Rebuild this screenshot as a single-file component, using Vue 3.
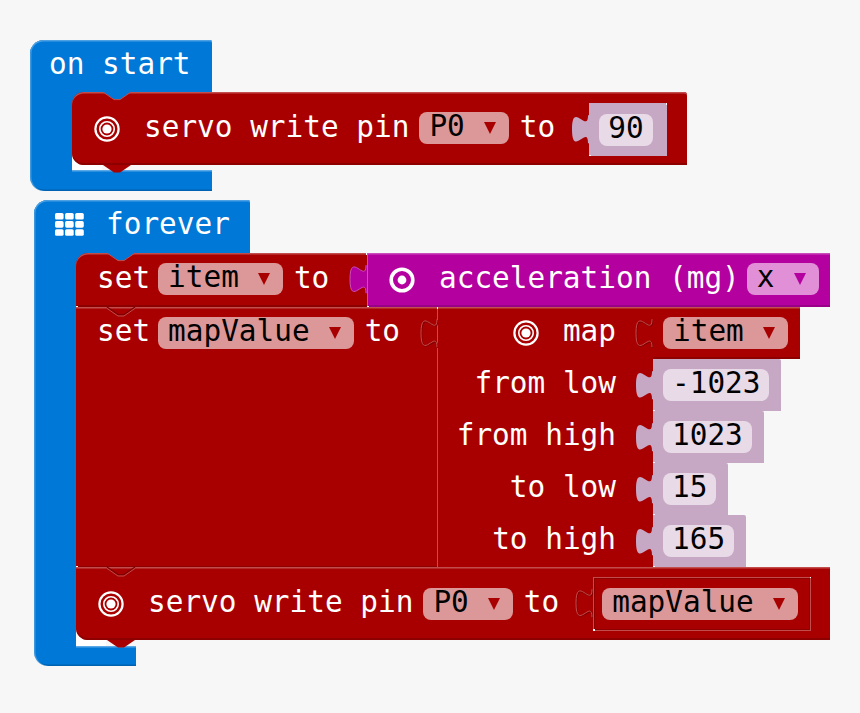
<template>
  <div class="page">
    <svg class="defs" aria-hidden="true">
      <defs>
        <path id="tab-shape" d="M17 .2H16c0 19-16-15-16 14s16-5 16 14h1z" />
        <path id="tab-edge" d="M16 .2c0 19-16-15-16 14s16-5 16 14" />
        <path id="notch-shape" d="M0 0l11 7.6h6L28 0z" />
        <path id="notch-edge" d="M0 0l11 7.6h6L28 0" />
        <g id="rings">
          <circle cx="14" cy="14" r="11.6" fill="none" stroke="#fff" stroke-width="2.2" />
          <circle cx="14" cy="14" r="7.2" fill="none" stroke="#fff" stroke-width="1.6" />
          <circle cx="14" cy="14" r="4.6" fill="#fff" />
        </g>
      </defs>
    </svg>

    <!-- on start -->
    <section class="hat">
      <header class="hat-head head-start">on start</header>
      <div class="hat-body">
        <div class="arm"></div>
        <div class="stack">
          <div class="block red servo servo-start first last">
            <svg class="notch notch-blue" viewBox="0 0 28 10"><use href="#notch-shape" /><use class="edge" href="#notch-edge" /></svg>
            <svg class="icon" viewBox="0 0 28 28"><use href="#rings" /></svg>
            <span class="label">servo write pin</span>
            <span class="pill"><span>P0</span><i class="arrow"></i></span>
            <span class="label to">to</span>
            <svg class="tab tab-lilac" viewBox="0 0 17 29"><use href="#tab-shape" /></svg>
            <span class="shadow shadow-90 dot-tr dot-bl"><span class="num">90</span></span>
            <svg class="bump" viewBox="0 0 28 10"><use href="#notch-shape" /></svg>
          </div>
          <div class="gap"></div>
        </div>
      </div>
      <footer class="hat-foot foot-start"></footer>
    </section>

    <!-- forever -->
    <section class="hat hat-forever">
      <header class="hat-head head-forever">
        <svg class="grid-icon" viewBox="0 0 29 23">
          <rect v-for="c in gridCells" :key="c.key" :x="c.x" :y="c.y" width="8.6" height="6.6" rx="1.6" fill="#fff" />
        </svg>
        forever
      </header>
      <div class="hat-body">
        <div class="arm"></div>
        <div class="stack">
          <div class="row row-first">
            <div class="block red set first dot-tr dot-bl">
              <svg class="notch notch-blue" viewBox="0 0 28 10"><use href="#notch-shape" /><use class="edge" href="#notch-edge" /></svg>
              <span class="label">set</span>
              <span class="pill item"><span>item</span><i class="arrow"></i></span>
              <span class="label to">to</span>
              <svg class="tab tab-purple" viewBox="0 0 17 29"><use href="#tab-shape" /><use class="edge" href="#tab-edge" /></svg>
            </div>
            <div class="block purple dot-bl">
              <svg class="icon" viewBox="0 0 28 28">
                <circle cx="14" cy="14" r="10.8" fill="none" stroke="#fff" stroke-width="3.6" />
                <circle cx="14" cy="14" r="4.4" fill="#fff" />
              </svg>
              <span class="label">acceleration (mg)</span>
              <span class="pill pill-purple"><span>x</span><i class="arrow"></i></span>
            </div>
          </div>

          <div class="row">
            <div class="block red set tall dot-tr dot-bl">
              <svg class="notch notch-red" viewBox="0 0 28 10"><use class="edge-dark" href="#notch-edge" /><use class="edge" href="#notch-edge" y="1.4" /></svg>
              <div class="set-line">
                <span class="label">set</span>
                <span class="pill"><span>mapValue</span><i class="arrow"></i></span>
                <span class="label to">to</span>
                <svg class="tab tab-ghost" viewBox="0 0 17 29"><use class="edge-dark" href="#tab-edge" x=".7" y=".7" /><use class="edge" href="#tab-edge" /></svg>
              </div>
            </div>
            <div class="map">
              <div v-for="(r, i) in mapRows" :key="r.label" class="map-row">
                <div class="block red map-label" :class="{ 'map-top': i === 0 }">
                  <svg v-if="i === 0" class="icon icon-map" viewBox="0 0 28 28"><use href="#rings" /></svg>
                  <span class="label">{{ r.label }}</span>
                  <svg v-if="i === 0" class="tab tab-ghost" viewBox="0 0 17 29"><use class="edge-dark" href="#tab-edge" x=".7" y=".7" /><use class="edge" href="#tab-edge" /></svg>
                  <svg v-else class="tab tab-lilac" viewBox="0 0 17 29"><use href="#tab-shape" /></svg>
                </div>
                <div v-if="i === 0" class="block red map-item">
                  <span class="pill item"><span>item</span><i class="arrow"></i></span>
                </div>
                <div v-else class="shadow map-value dot-bl"><span class="num">{{ r.value }}</span></div>
              </div>
            </div>
          </div>

          <div class="block red servo wide last">
            <svg class="notch notch-red" viewBox="0 0 28 10"><use class="edge-dark" href="#notch-edge" /><use class="edge" href="#notch-edge" y="1.4" /></svg>
            <svg class="icon" viewBox="0 0 28 28"><use href="#rings" /></svg>
            <span class="label">servo write pin</span>
            <span class="pill"><span>P0</span><i class="arrow"></i></span>
            <span class="label to">to</span>
            <svg class="tab tab-ghost" viewBox="0 0 17 29"><use class="edge-dark" href="#tab-edge" x=".7" y=".7" /><use class="edge" href="#tab-edge" /></svg>
            <span class="var-box dot-tr dot-bl"><span class="pill"><span>mapValue</span><i class="arrow"></i></span></span>
            <svg class="bump" viewBox="0 0 28 10"><use href="#notch-shape" /></svg>
          </div>
          <div class="gap"></div>
        </div>
      </div>
      <footer class="hat-foot foot-forever"></footer>
    </section>
  </div>
</template>

<script setup>
// the 3x3 "forever" glyph
const gridCells = []
for (let r = 0; r < 3; r++) {
  for (let c = 0; c < 3; c++) {
    gridCells.push({ key: r + '-' + c, x: c * 10.1, y: r * 8.1 })
  }
}

const mapRows = [
  { label: 'map' },
  { label: 'from low', value: '-1023' },
  { label: 'from high', value: '1023' },
  { label: 'to low', value: '15' },
  { label: 'to high', value: '165' },
]
</script>

<style>
html,
body {
  margin: 0;
  background: #f7f7f7;
}
</style>

<style scoped>
.page {
  box-sizing: border-box;
  width: 860px;
  height: 713px;
  overflow: hidden;
  padding: 40px 0 0 30px;
  font-family: "DejaVu Sans Mono", "Liberation Mono", monospace;
  font-size: 29.4px;
  line-height: 29px;
  color: #fff;
}

.defs {
  position: absolute;
  width: 0;
  height: 0;
}

/* --- HATS --- */
.hat {
  display: flex;
  flex-direction: column;
  align-items: flex-start;
}

.hat-forever {
  margin: 9px 0 0 4px;
}

.hat-head {
  box-sizing: border-box;
  display: flex;
  align-items: center;
  background: #0078d7;
  border-radius: 14px 2px 0 0;
  box-shadow: inset 0 1.5px 0 #4ca0e3, inset 1.5px 0 0 #3d98e0;
}

.head-start {
  width: 182px;
  height: 52px;
  padding: 0 0 3px 19px;
}

.head-forever {
  width: 216px;
  height: 53px;
  padding: 0 0 4px 21px;
}

.grid-icon {
  width: 29px;
  height: 23px;
  margin-right: 22px;
}

.hat-body {
  display: flex;
  background: linear-gradient(#0078d7, #0078d7) 0 0 / 100px 20px no-repeat;
}

.arm {
  width: 42px;
  background: #0078d7;
  box-shadow: inset 1.5px 0 0 #3d98e0;
}

.stack {
  display: flex;
  flex-direction: column;
  background: linear-gradient(#fff, #fff) 0 100% / 16px 18px no-repeat;
}

.gap {
  height: 5px;
  background: linear-gradient(90deg, #fff 30px, #f7f7f7 30px);
}

.hat-forever .gap {
  height: 6px;
}

.hat-foot {
  background: linear-gradient(#5aa8e6, #5aa8e6) 42px 0 / 100% 1.5px no-repeat, #0078d7;
  border-radius: 0 0 0 14px;
  box-shadow: inset 1.5px 0 0 #3d98e0, inset 0 -1.5px 0 #0062b0;
}

.foot-start {
  width: 182px;
  height: 21px;
}

.foot-forever {
  width: 102px;
  height: 20px;
}

/* --- BLOCKS --- */
.block {
  position: relative;
  box-sizing: border-box;
  display: flex;
  align-items: center;
  flex: none;
}

.red {
  background: #a80000;
  box-shadow: inset 0 1.5px 0 #c24d4d, inset 0 -2px 0 #8c0000;
}

.first {
  border-top-left-radius: 12px;
}

.last {
  border-bottom-left-radius: 12px;
  z-index: 1;
}

.servo {
  height: 73px;
  padding-left: 21px;
  width: 615px;
}

.servo-start {
  border-top-right-radius: 3px;
}

.servo-start .pill {
  margin-bottom: 1px;
}

.wide {
  width: 754px;
}

.wide .tab-ghost {
  margin-left: 17px;
}

.set {
  height: 54px;
  width: 291px;
  padding-left: 21px;
}

.tall {
  height: 260px;
  width: 362px;
  align-items: flex-start;
  box-shadow: inset 0 1.5px 0 #c24d4d, inset -1px 0 0 #c24d4d, inset 0 -1px 0 #8c0000;
}

.set-line {
  display: flex;
  align-items: center;
  width: 100%;
  height: 52px;
}

.purple {
  height: 54px;
  width: 463px;
  padding-left: 21px;
  background: #b4009e;
  box-shadow: inset 0 1.5px 0 #cb4dbb, inset 1px 0 0 #cb4dbb, inset 0 -2px 0 #9a0087;
}

.row {
  display: flex;
}

.row-first .pill {
  margin-bottom: 2px;
}

.label {
  white-space: pre;
  padding-bottom: 3px;
}

.icon {
  width: 28px;
  height: 28px;
  margin-right: 23px;
  flex: none;
}

.to {
  margin-left: 11px;
}

.set .label + .pill {
  margin-left: 8px;
}

.servo .label + .pill {
  margin-left: 10px;
}

.purple .label + .pill {
  margin-left: 7px;
}

/* --- FIELDS --- */
.pill {
  display: inline-flex;
  align-items: center;
  flex: none;
  height: 32px;
  padding: 0 13px 0 10px;
  background: #dc9898;
  border-radius: 8px;
  color: #000;
}

.pill > span {
  padding-bottom: 3px;
}

.pill-purple {
  background: #e190d8;
}

.arrow {
  width: 0;
  height: 0;
  margin-left: 19px;
  border-left: 6px solid transparent;
  border-right: 6px solid transparent;
  border-top: 12px solid #a80000;
}

.pill-purple .arrow {
  border-top-color: #b4009e;
}

.shadow {
  position: relative;
  box-sizing: border-box;
  display: flex;
  align-items: center;
  background: #c6a7c4;
  border-radius: 0 2px 0 0;
}

.shadow-90 {
  width: 78px;
  height: 53px;
  margin-top: 2px;
  padding-left: 10px;
}

.num {
  display: block;
  height: 32px;
  padding: 0 9px;
  background: #e8dae7;
  border-radius: 8px;
  color: #000;
}

.var-box {
  position: relative;
  box-sizing: border-box;
  display: flex;
  align-items: center;
  width: 218px;
  height: 54px;
  padding-left: 9px;
  box-shadow: inset 0 0 0 1px #c24d4d, inset 0 0 0 2px #8c0000;
}

/* small light specks where the blocks meet */
.dot-tr::before,
.dot-bl::after {
  content: "";
  position: absolute;
  width: 1.5px;
  height: 1.5px;
  background: #fff;
}

.dot-tr::before {
  top: 0;
  right: 0;
}

.dot-bl::after {
  bottom: 0;
  left: 0;
}

/* --- TABS & NOTCHES --- */
.tab {
  width: 17px;
  height: 29px;
  flex: none;
  overflow: visible;
}

.tab-lilac {
  margin-left: 17px;
  fill: #c6a7c4;
}

.servo-start .tab-lilac {
  margin-top: 2px;
}

.tab-purple {
  margin-left: 0;
  position: absolute;
  right: 0;
  top: 12px;
  fill: #b4009e;
}

.tab-purple .edge {
  fill: none;
  stroke: #cb4dbb;
  stroke-width: 1;
}

.tab-ghost {
  margin-left: 19px;
  fill: none;
}

.edge {
  fill: none;
  stroke: #c24d4d;
  stroke-width: 1;
}

.edge-dark {
  fill: none;
  stroke: #7e0000;
  stroke-width: 1.2;
}

.set-line .tab-ghost {
  position: absolute;
  right: 0;
  top: 12px;
}

.notch {
  position: absolute;
  left: 31px;
  top: 0;
  width: 28px;
  height: 10px;
  overflow: visible;
}

.notch-blue {
  fill: #0078d7;
}

.notch-red {
  fill: none;
}

.bump {
  position: absolute;
  left: 31px;
  top: 100%;
  width: 28px;
  height: 10px;
  fill: #a80000;
}

/* --- MAP --- */
.map {
  display: flex;
  flex-direction: column;
}

.map-row {
  display: flex;
  height: 52px;
}

.map-label {
  width: 215px;
  justify-content: flex-end;
  box-shadow: none;
}

.map-top {
  box-shadow: inset 0 1.5px 0 #c24d4d;
}

.map-label .tab-lilac,
.map-label .tab-ghost {
  margin-left: 20px;
}

.map-item {
  padding: 0 12px 0 10px;
}

.map-value {
  padding: 0 12px 0 10px;
}

.icon-map {
  margin-right: 23px;
}
</style>
